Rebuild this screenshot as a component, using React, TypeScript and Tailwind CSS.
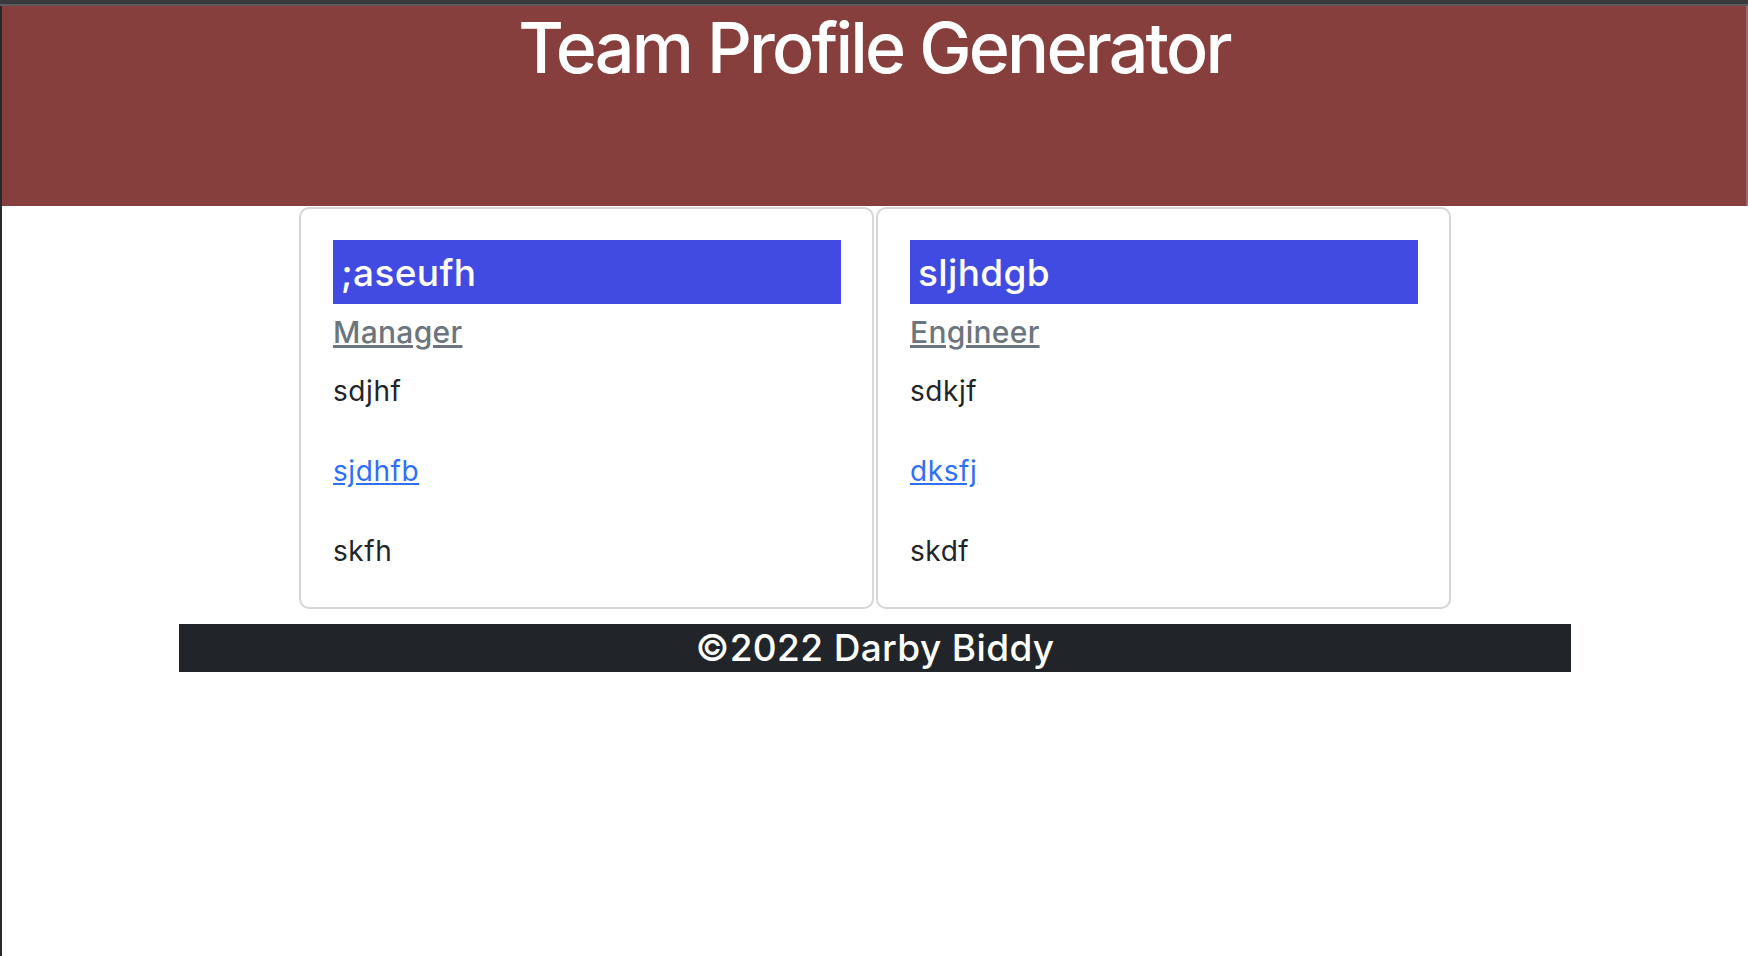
import React from 'react';

interface Employee {
  name: string;
  role: string;
  id: string;
  email: string;
  extra: string;
}

const team: Employee[] = [
  { name: ';aseufh', role: 'Manager', id: 'sdjhf', email: 'sjdhfb', extra: 'skfh' },
  { name: 'sljhdgb', role: 'Engineer', id: 'sdkjf', email: 'dksfj', extra: 'skdf' },
];

const ProfileCard: React.FC<{ person: Employee }> = ({ person }) => (
  <div className="w-[575px] border-2 border-[#d6d6d6] rounded-[10px] bg-white pt-[31px] pb-[16px] pl-[32px] pr-[31px]">
    <h3 className="h-[64px] bg-[#424be1] text-white text-[37px] leading-[66px] font-medium px-[8px] tracking-[0.01em]">
      {person.name}
    </h3>
    <div className="pt-[8px]">
      <a href="#" className="text-[30px] leading-[41px] font-medium text-[#6c757d] underline tracking-[0.01em]">
        {person.role}
      </a>
    </div>
    <ul className="-mt-[2px] text-[28px] text-[#212529] tracking-[0.02em]">
      <li className="leading-[80px]">{person.id}</li>
      <li className="leading-[80px]">
        <a href="#" className="text-[#2f6ff6] underline">
          {person.email}
        </a>
      </li>
      <li className="leading-[80px]">{person.extra}</li>
    </ul>
  </div>
);

export default function App() {
  return (
    <div
      className="min-h-[956px] bg-white flex flex-col"
      style={{ fontFamily: 'Inter, "Noto Sans", "Liberation Sans", sans-serif' }}
    >
      <div className="h-[4px] bg-[#393a3e]" />
      <div className="h-[2px] bg-[#5c5c5e]" />
      <div className="flex flex-1">
        <div className="w-[2px] bg-[#2a2a2c]" />
        <div className="flex-1 flex flex-col">
          <header className="h-[200px] bg-[#873f3e] border-r-2 border-[#a06a6a]">
            <h1 className="text-center text-white text-[70px] leading-[84px] font-medium tracking-[-0.04em]">
              Team Profile Generator
            </h1>
          </header>

          <main className="flex justify-center gap-[2px] pt-[1px]">
            {team.map(p => (
              <ProfileCard key={p.name} person={p} />
            ))}
          </main>

          <footer className="mt-[15px] w-[1392px] mx-auto bg-[#212529] h-[48px] text-center text-white text-[37px] leading-[48px] font-medium tracking-[0.01em]">
            ©2022 Darby Biddy
          </footer>
        </div>
      </div>
    </div>
  );
}
